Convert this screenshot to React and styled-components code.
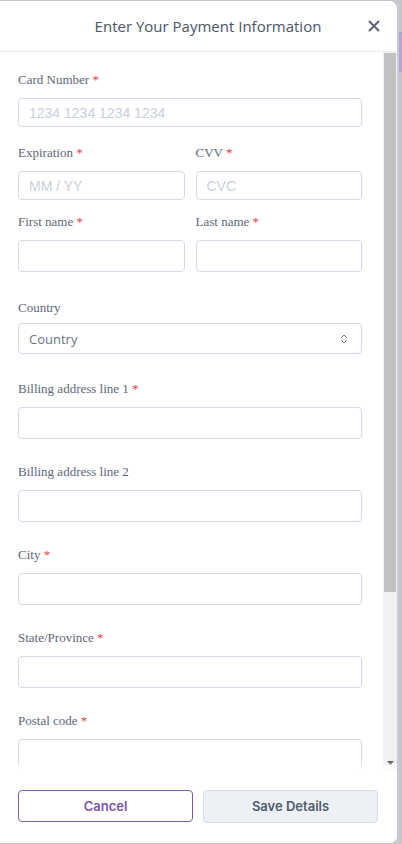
import React from 'react';
import styled, { createGlobalStyle } from 'styled-components';
import { ChevronsUpDown } from 'lucide-react';

const GlobalStyle = createGlobalStyle`
    html, body {
        margin: 0;
        padding: 0;
        height: 100%;
        overflow: hidden;
        background: #c6c8cd;
    }
    * {
        box-sizing: border-box;
    }
`;

const Page = styled.div`
    display: flex;
    height: 844px;
`;

const Modal = styled.div`
    width: 397px;
    height: 842px;
    margin-top: 1px;
    display: flex;
    flex-direction: column;
    background: #fff;
    border-radius: 0 7px 7px 0;
    box-shadow: 1px 0 0 #b9bcc3;
    overflow: hidden;
`;

const Behind = styled.div`
    flex: 1;
    display: flex;
    flex-direction: column;
    padding-top: 32px;
    border-left: 2px solid #c9cbd0;
    background: #c4c6cb;
`;

const BehindBar = styled.div`
    height: 40px;
    border-top: 2px solid #8fb0c6;
    background: #b7a3d6;
`;

const Header = styled.div`
    height: 51px;
    flex-shrink: 0;
    display: flex;
    align-items: center;
    padding: 0 11px 0 54px;
    border-bottom: 1px solid #e9ecf1;
`;

const Title = styled.h2`
    flex: 1;
    margin: 0;
    text-align: center;
    font-family: "Open Sans", "Noto Sans", sans-serif;
    font-size: 15px;
    font-weight: 400;
    color: #4a5568;
`;

const CloseButton = styled.button`
    width: 24px;
    height: 24px;
    display: flex;
    align-items: center;
    justify-content: center;
    padding: 0;
    border: 0;
    background: none;
    cursor: pointer;
`;

// scroll area: the form plus a drawn scrollbar column
const Body = styled.div`
    flex: 1;
    min-height: 0;
    display: flex;
`;

const Form = styled.div`
    flex: 1;
    min-width: 0;
    overflow: hidden;
    padding: 20px 21px 0 18px;
    display: flex;
    flex-direction: column;
`;

const ScrollTrack = styled.div`
    width: 14px;
    flex-shrink: 0;
    display: flex;
    flex-direction: column;
    background: #f1f1f1;
`;

const ScrollThumb = styled.div`
    height: 539px;
    margin: 1px 1px 0;
    background: #c1c1c1;
`;

const ScrollArrow = styled.div`
    margin-top: auto;
    height: 14px;
    display: flex;
    align-items: center;
    justify-content: center;
`;

const Field = styled.div`
    display: flex;
    flex-direction: column;
    margin-top: ${p => p.$top}px;
`;

const Row = styled.div`
    display: grid;
    grid-template-columns: 1fr 1fr;
    column-gap: 11px;
    margin-top: ${p => p.$top}px;
`;

const Label = styled.label`
    font-family: "Liberation Serif", serif;
    font-size: 13px;
    line-height: 16px;
    color: #5d687c;
    margin-bottom: ${p => p.$gap ?? 10}px;
`;

const Star = styled.span`
    color: #e53e3e;
`;

const Input = styled.input`
    width: 100%;
    height: ${p => p.$h ?? 32}px;
    flex-shrink: 0;
    padding: 0 10px;
    border: 1px solid #d3d9e8;
    border-radius: 4px;
    background: #fff;
    font-family: "Liberation Sans", Arial, sans-serif;
    font-size: 14px;
    color: #2d3748;
    outline: none;

    &::placeholder {
        color: #c9d0df;
    }
`;

const SelectBox = styled.div`
    height: 31px;
    display: flex;
    align-items: center;
    justify-content: space-between;
    padding: 0 11px 0 10px;
    border: 1px solid #d3d9e8;
    border-radius: 4px;
    font-family: "Open Sans", "Noto Sans", sans-serif;
    font-size: 13px;
    color: #6b7385;
`;

const Footer = styled.div`
    position: relative;
    z-index: 1;
    flex-shrink: 0;
    height: 73px;
    display: grid;
    grid-template-columns: 1fr 1fr;
    column-gap: 10px;
    align-items: center;
    padding: 0 19px 1px 18px;
    background: #fff;
    box-shadow: 0 -5px 6px rgba(255, 255, 255, 0.85);
`;

const Button = styled.button`
    height: ${p => (p.$primary ? 33 : 32)}px;
    border-radius: 4px;
    border: ${p => (p.$primary ? '1.5px solid #d6dce8' : '1px solid #7d5bb0')};
    background: ${p => (p.$primary ? '#edf0f5' : '#fff')};
    color: ${p => (p.$primary ? '#4f5a6e' : '#7954a8')};
    font-family: Inter, "Noto Sans", sans-serif;
    font-size: 13px;
    font-weight: 600;
    cursor: pointer;
`;

function FieldLabel({ children, required, gap }) {
    return (
        <Label $gap={gap}>
            {children}
            {required ? <> <Star>*</Star></> : null}
        </Label>
    );
}

function TextField({ label, required, placeholder, top = 25, h, gap }) {
    return (
        <Field $top={top}>
            <FieldLabel required={required} gap={gap}>{label}</FieldLabel>
            <Input placeholder={placeholder} $h={h} />
        </Field>
    );
}

export default function App() {
    return (
        <>
            <GlobalStyle />
            <Page>
                <Modal>
                    <Header>
                        <Title>Enter Your Payment Information</Title>
                        <CloseButton aria-label="Close">
                            <svg width="12" height="12" viewBox="0 0 12 12">
                                <path d="M1.5 1.5l9 9M10.5 1.5l-9 9" stroke="#5b6478" strokeWidth="2" strokeLinecap="round" />
                            </svg>
                        </CloseButton>
                    </Header>
                    <Body>
                        <Form>
                            <TextField label="Card Number" required placeholder="1234 1234 1234 1234" top={0} h={29} />
                            <Row $top={18}>
                                <TextField label="Expiration" required placeholder="MM / YY" top={0} h={29} />
                                <TextField label="CVV" required placeholder="CVC" top={0} h={29} />
                            </Row>
                            <Row $top={14}>
                                <TextField label="First name" required top={0} />
                                <TextField label="Last name" required top={0} />
                            </Row>
                            <Field $top={28}>
                                <FieldLabel gap={7}>Country</FieldLabel>
                                <SelectBox>
                                    Country
                                    <ChevronsUpDown size={12} strokeWidth={2} color="#6b7385" />
                                </SelectBox>
                            </Field>
                            <TextField label="Billing address line 1" required top={27} />
                            <TextField label="Billing address line 2" />
                            <TextField label="City" required />
                            <TextField label="State/Province" required />
                            <TextField label="Postal code" required />
                        </Form>
                        <ScrollTrack>
                            <ScrollThumb />
                            <ScrollArrow>
                                <svg width="7" height="4" viewBox="0 0 7 4">
                                    <path d="M0 0h7L3.5 4z" fill="#505050" />
                                </svg>
                            </ScrollArrow>
                        </ScrollTrack>
                    </Body>
                    <Footer>
                        <Button>Cancel</Button>
                        <Button $primary>Save Details</Button>
                    </Footer>
                </Modal>
                <Behind>
                    <BehindBar />
                </Behind>
            </Page>
        </>
    );
}
